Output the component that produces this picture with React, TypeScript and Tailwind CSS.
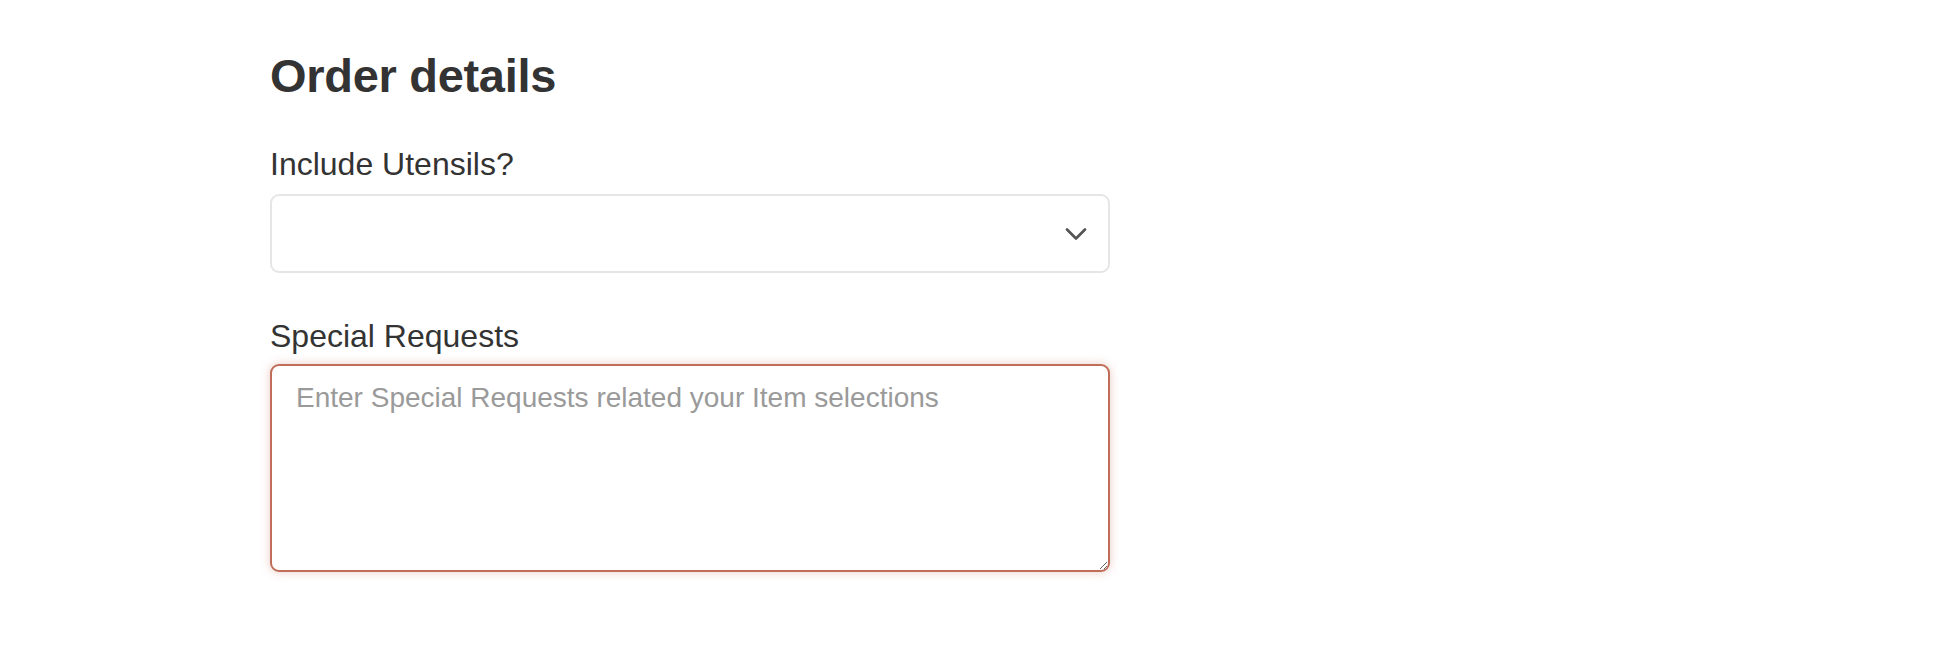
import { ChevronDown } from 'lucide-react';

export default function App() {
  return (
    <div className="min-h-[648px] bg-white font-['Liberation_Sans',Arial,sans-serif] text-[#333333]">
      <div className="ml-[270px] w-[840px] pt-[52px]">
        <h1 className="text-[47px] font-bold leading-none tracking-[-0.3px]">Order details</h1>

        {/* Utensils */}
        <div className="mt-[49px]">
          <label className="block text-[32px] leading-none">Include Utensils?</label>
          <div className="relative mt-[14px] h-[79px] rounded-[9px] border-2 border-[#e6e6e6] bg-white">
            <ChevronDown
              className="absolute right-[14px] top-1/2 h-[36px] w-[36px] -translate-y-1/2 text-[#555555]"
              strokeWidth={1.8}
            />
          </div>
        </div>

        {/* Special requests */}
        <div className="mt-[47px]">
          <label className="block text-[32px] leading-none">Special Requests</label>
          <textarea
            className="mt-[12px] block h-[208px] w-full rounded-[9px] border-2 border-[#c06e5a] bg-white px-[24px] pt-[18px] text-[28px] leading-none text-[#333333] shadow-[0_0_10px_rgba(192,110,90,0.35)] outline-none placeholder:text-[#9a9a9a]"
            placeholder="Enter Special Requests related your Item selections"
          />
        </div>
      </div>
    </div>
  );
}
